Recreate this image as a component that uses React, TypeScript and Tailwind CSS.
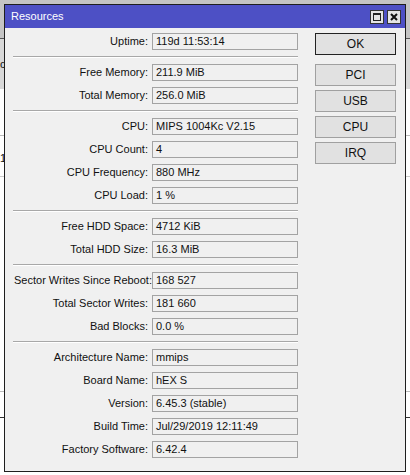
import React from "react";

type Row = { label: string; value: string };

const groups: Row[][] = [
  [{ label: "Uptime:", value: "119d 11:53:14" }],
  [
    { label: "Free Memory:", value: "211.9 MiB" },
    { label: "Total Memory:", value: "256.0 MiB" },
  ],
  [
    { label: "CPU:", value: "MIPS 1004Kc V2.15" },
    { label: "CPU Count:", value: "4" },
    { label: "CPU Frequency:", value: "880 MHz" },
    { label: "CPU Load:", value: "1 %" },
  ],
  [
    { label: "Free HDD Space:", value: "4712 KiB" },
    { label: "Total HDD Size:", value: "16.3 MiB" },
  ],
  [
    { label: "Sector Writes Since Reboot:", value: "168 527" },
    { label: "Total Sector Writes:", value: "181 660" },
    { label: "Bad Blocks:", value: "0.0 %" },
  ],
  [
    { label: "Architecture Name:", value: "mmips" },
    { label: "Board Name:", value: "hEX S" },
    { label: "Version:", value: "6.45.3 (stable)" },
    { label: "Build Time:", value: "Jul/29/2019 12:11:49" },
    { label: "Factory Software:", value: "6.42.4" },
  ],
];

const buttons = ["PCI", "USB", "CPU", "IRQ"];

const Field = ({ label, value }: Row) => (
  <div className="flex h-[17px] items-center">
    <div className="w-[138px] shrink-0 whitespace-nowrap pr-[4px] text-right">
      {label}
    </div>
    <div className="flex h-[17px] w-[146px] items-center border border-[#a3a3a3] bg-[#f0f0f0] pl-[3px] whitespace-nowrap">
      {value}
    </div>
  </div>
);

const Separator = () => (
  <div className="-ml-px h-[2px] w-[285px] border-t border-[#a8a8a8] border-b border-b-white" />
);

export default function App() {
  return (
    <div className="relative h-[475px] w-[410px] overflow-hidden bg-white font-['Liberation_Sans',Arial,sans-serif] text-[11px] text-[#111]">
      {/* winbox main window behind */}
      <div className="absolute inset-0">
        <div className="h-[39px] border-b border-[#555] bg-[#c4c4c4]" />
        <div className="h-[50px] bg-[#d8d8d8] text-[11px] leading-[50px]">cs</div>
        <div className="mt-[46px] h-px bg-[#bbb]" />
        <div className="pt-[14px]">1</div>
        <div className="mt-[9px] h-px bg-[#ccc]" />
        <div className="absolute right-0 top-[391px] h-px w-full bg-[#bbb]" />
        <div className="absolute right-0 top-[417px] h-px w-full bg-[#333]" />
      </div>

      <div className="relative ml-[4px] mt-[4px] flex h-[468px] w-[402px] flex-col border border-[#1e1e1e] bg-[#f0f0f0]">
        <div className="flex h-[23px] items-center justify-between bg-[#4d50c5] pl-[6px] pr-[4px]">
          <span className="text-[11px] text-white">Resources</span>
          <div className="flex gap-[3px]">
            <div className="flex h-[14px] w-[14px] items-center justify-center border border-[#333] bg-[#e4e4e4]">
              <div className="h-[8px] w-[8px] border border-[#222] border-t-2" />
            </div>
            <div className="flex h-[14px] w-[14px] items-center justify-center border border-[#333] bg-[#e4e4e4]">
              <svg width="8" height="8" viewBox="0 0 8 8">
                <path d="M1 1 L7 7 M7 1 L1 7" stroke="#111" strokeWidth="2" />
              </svg>
            </div>
          </div>
        </div>

        <div className="flex pl-[9px] pr-[9px] pt-[5px]">
          <div className="flex w-[284px] flex-col gap-[6px]">
            {groups.map((g, gi) => (
              <React.Fragment key={gi}>
                {gi > 0 && <Separator />}
                {g.map((r) => (
                  <Field key={r.label} {...r} />
                ))}
              </React.Fragment>
            ))}
          </div>

          <div className="ml-auto flex w-[81px] flex-col">
            <button className="h-[22px] border border-[#222] bg-[#e1e1e1] text-[12px]">
              OK
            </button>
            <div className="mt-[9px] flex flex-col gap-[4px]">
              {buttons.map((b) => (
                <button
                  key={b}
                  className="h-[22px] border border-[#a0a0a0] bg-[#e1e1e1] text-[12px]"
                >
                  {b}
                </button>
              ))}
            </div>
          </div>
        </div>
      </div>
    </div>
  );
}
